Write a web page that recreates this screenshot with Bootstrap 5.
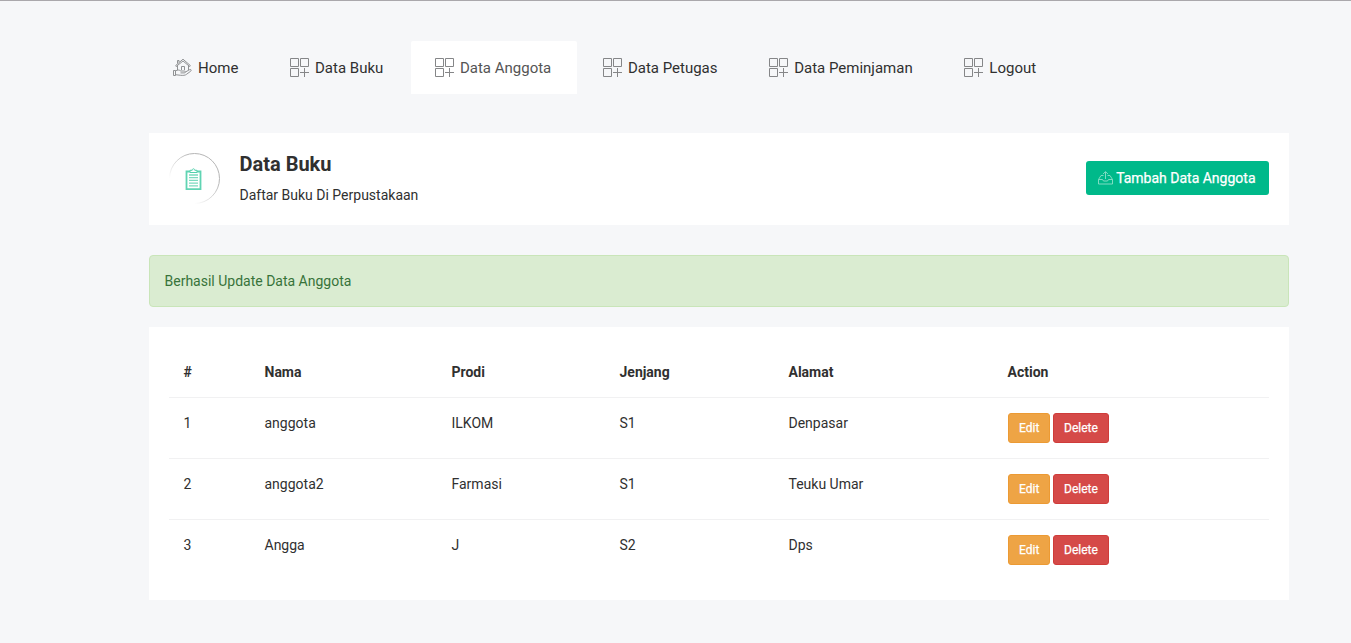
<!DOCTYPE html>
<html lang="id">
<head>
<meta charset="utf-8">
<meta name="viewport" content="width=device-width, initial-scale=1">
<title>Data Anggota</title>
<link href="https://cdn.jsdelivr.net/npm/bootstrap@5.3.0/dist/css/bootstrap.min.css" rel="stylesheet">
<style>
body{font-family:Roboto,sans-serif;font-size:14px;line-height:20px;color:#303030;background:#f6f7f9;border-top:1px solid #aaa8ac;min-height:643px;overflow:hidden}
.page{width:1140px;margin-left:149px;padding-top:40px}
.main-tabs{margin-bottom:39px;gap:2px}
.main-tabs .nav-link{height:53px;padding:0 25.650px 0 24px;font-size:15px;color:#303030;border-radius:2px 2px 0 0;gap:6px;white-space:nowrap}
.main-tabs .nav-link.active{background:#fff;color:#555}
.main-tabs svg{width:19px;height:19px;flex:none;color:#858688}
.panel{background:#fff}
.heading-panel{height:92px;padding:0 20px 1px;margin-bottom:30px}
.round-icon{width:51px;height:51px;margin-right:19.500px}
h1{font-size:20px;line-height:22px;font-weight:700;margin:1px 0 10px}
.btn-add{background:#00b98a;color:#fff;height:34px;margin-bottom:1px;padding:0 13.500px 0 12px;border:0;border-radius:3px;font-size:14px;font-weight:400;gap:3px;-webkit-text-stroke:.25px #fff}
.btn-add:hover{background:#00a67c;color:#fff}
.notice{background:#daecd1;border:1px solid #c9e5b9;color:#37733a;height:52px;padding:15px 14.500px;border-radius:4px;margin-bottom:20px}
.table-panel{height:273px;padding:20px}
.members{table-layout:fixed;width:1100px;margin:0;color:#303030;--bs-table-color:#303030;--bs-table-bg:#fff}
.members th,.members td{padding:15px 15px 15px 14.500px;border:0;box-shadow:none}
.members tbody td{border-top:1px solid #f1f1f2}
.members td:last-child{font-size:0;padding-left:15px}
.btn-row{height:30px;padding:0 10px;font-size:12px;line-height:28px;border-radius:3px;color:#fff;-webkit-text-stroke:.25px #fff}
.btn-edit{background:#eea445;border-color:#ec9a33;margin-right:3px;width:42px}
.btn-delete{background:#d54a48;border-color:#cf3c3a;width:56px}
</style>
<script src="https://cdn.jsdelivr.net/npm/bootstrap@5.3.0/dist/js/bootstrap.bundle.min.js"></script>
</head>
<body>
<svg class="d-none" xmlns="http://www.w3.org/2000/svg">
  <symbol id="apps" viewBox="0 0 19 19"><path d="M.5.5h8v8h-8zM10.500.5h8v8h-8zM.5 10.500h8v8h-8zM14.500 10v9M10 14.500h9" fill="none" stroke="currentColor"/></symbol>
  <symbol id="home" viewBox="0 0 19 19"><g fill="none" stroke="currentColor" stroke-width=".9" stroke-linejoin="round"><path d="M3.200 8.500 2.700 7.500 10 1.200l7.300 6.300-.6 1L10 3 3.200 8.500M4.500 8v4M15.500 8v4M8.500 12V8.500h3V12M4.500 5.500V2.500H6v1.500"/><path d="M.5 12.500h2v5h-2zM2.500 13c2-1.400 3.800-1.200 5.300 0h3.500c1.600 0 1.500 1.900 0 1.900H7.500M12.500 14l4-2.300c1.500-.8 2.200.6 1.200 1.500l-4 3c-1.500 1.300-4 1.300-6 1.100l-5.200-.6"/></g></symbol>
</svg>
<main class="page">
  <ul class="nav main-tabs">
    <li class="nav-item"><a class="nav-link d-flex align-items-center" href="#"><svg><use href="#home"/></svg>Home</a></li>
    <li class="nav-item"><a class="nav-link d-flex align-items-center" href="#"><svg><use href="#apps"/></svg>Data Buku</a></li>
    <li class="nav-item"><a class="nav-link active d-flex align-items-center" href="#"><svg><use href="#apps"/></svg>Data Anggota</a></li>
    <li class="nav-item"><a class="nav-link d-flex align-items-center" href="#"><svg><use href="#apps"/></svg>Data Petugas</a></li>
    <li class="nav-item"><a class="nav-link d-flex align-items-center" href="#"><svg><use href="#apps"/></svg>Data Peminjaman</a></li>
    <li class="nav-item"><a class="nav-link d-flex align-items-center" href="#"><svg><use href="#apps"/></svg>Logout</a></li>
  </ul>
  <section class="panel heading-panel d-flex align-items-center">
    <svg class="round-icon" viewBox="0 0 51 51" fill="none">
      <defs><linearGradient id="ring" x1="0" y1="1" x2="1" y2="0"><stop offset=".25" stop-color="#b5b5b5" stop-opacity="0"/><stop offset=".7" stop-color="#b5b5b5"/></linearGradient></defs>
      <circle cx="25.500" cy="25.500" r="25" stroke="url(#ring)"/>
      <path d="M17.500 18.500h14v17.700h-14z" stroke="#60d4b3" stroke-width="1.800"/>
      <path d="M21 19.500v-2.200h2.200c0-2 2.600-2 2.600 0H28v2.200z" fill="#fff" stroke="#52d0ac"/>
      <path d="M20 22h9M20 24.700h9M20 27.400h9M20 30.100h9M20 32.800h9" stroke="#7bdabf" stroke-width="1.300"/>
    </svg>
    <div><h1>Data Buku</h1><div>Daftar Buku Di Perpustakaan</div></div>
    <a class="btn btn-add ms-auto d-flex align-items-center" href="#">
      <svg width="15" height="14" viewBox="0 0 15 14" fill="none" stroke="#8de0ca" stroke-width=".9"><path d="M5.500 4.500H3L.5 8.500v4.500h14V8.500L12 4.500H9.500M.5 8.500h4l1 1.500h4l1-1.500h4M7.500 8V.8M5 3.100 7.500.6 10 3.100"/></svg>Tambah Data Anggota</a>
  </section>
  <div class="alert notice" role="alert">Berhasil Update Data Anggota</div>
  <section class="panel table-panel">
    <table class="table members">
      <colgroup><col style="width:81px"><col style="width:187px"><col style="width:168px"><col style="width:169px"><col style="width:219px"><col style="width:276px"></colgroup>
      <thead><tr><th>#</th><th>Nama</th><th>Prodi</th><th>Jenjang</th><th>Alamat</th><th>Action</th></tr></thead>
      <tbody>
        <tr><td>1</td><td>anggota</td><td>ILKOM</td><td>S1</td><td>Denpasar</td><td><a class="btn btn-row btn-edit" href="#">Edit</a><a class="btn btn-row btn-delete" href="#">Delete</a></td></tr>
        <tr><td>2</td><td>anggota2</td><td>Farmasi</td><td>S1</td><td>Teuku Umar</td><td><a class="btn btn-row btn-edit" href="#">Edit</a><a class="btn btn-row btn-delete" href="#">Delete</a></td></tr>
        <tr><td>3</td><td>Angga</td><td>J</td><td>S2</td><td>Dps</td><td><a class="btn btn-row btn-edit" href="#">Edit</a><a class="btn btn-row btn-delete" href="#">Delete</a></td></tr>
      </tbody>
    </table>
  </section>
</main>
</body>
</html>
